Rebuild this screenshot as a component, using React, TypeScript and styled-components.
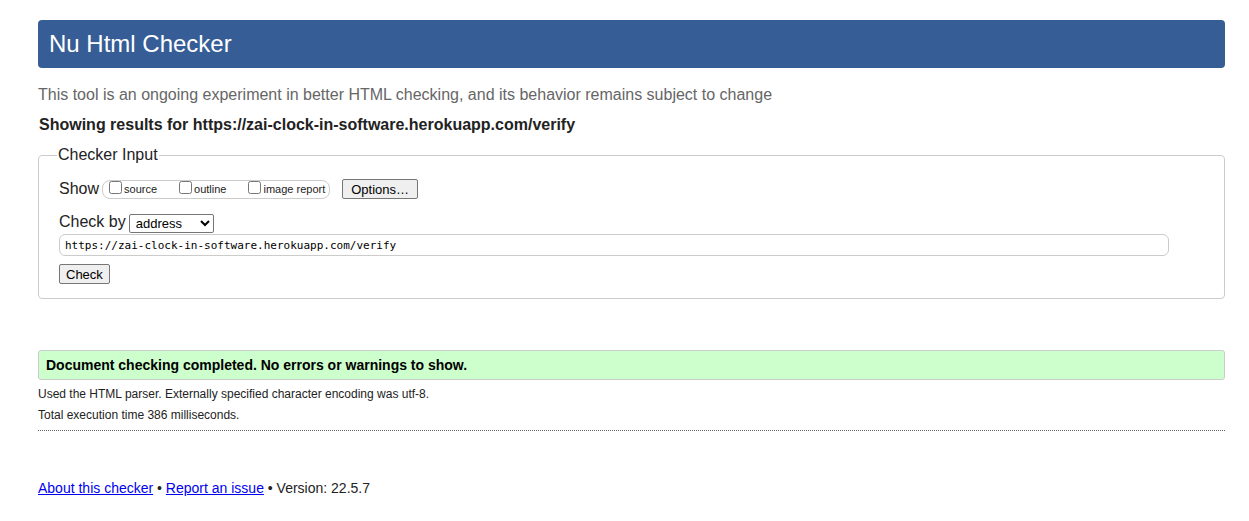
import styled, { createGlobalStyle } from 'styled-components';

const GlobalStyle = createGlobalStyle`
  html, body {
    margin: 0;
    padding: 0;
    background: #fff;
  }
  body {
    font-family: 'Liberation Sans', Arial, sans-serif;
    color: #222;
  }
`;

const App = () => {
  return (
    <Page>
      <GlobalStyle />
      <Header>
        <Title>Nu Html Checker</Title>
      </Header>

      <Intro>This tool is an ongoing experiment in better HTML checking, and its behavior remains subject to change</Intro>

      <ResultsFor>Showing results for https://zai-clock-in-software.herokuapp.com/verify</ResultsFor>

      <InputSet>
        <Legend>Checker Input</Legend>

        <Row>
          <RowLabel>Show</RowLabel>
          <CheckGroup>
            <CheckLabel $gap={20}>
              <Box type="checkbox" />
              source
            </CheckLabel>
            <CheckLabel $gap={20}>
              <Box type="checkbox" />
              outline
            </CheckLabel>
            <CheckLabel $gap={0}>
              <Box type="checkbox" />
              image report
            </CheckLabel>
          </CheckGroup>
          <Button>Options…</Button>
        </Row>

        <Row>
          <RowLabel>Check by</RowLabel>
          <Select defaultValue="address">
            <option value="address">address</option>
            <option value="file">file upload</option>
            <option value="text">text input</option>
          </Select>
        </Row>

        <UrlInput defaultValue="https://zai-clock-in-software.herokuapp.com/verify" />

        <CheckRow>
          <Button $narrow>Check</Button>
        </CheckRow>
      </InputSet>

      <Success>Document checking completed. No errors or warnings to show.</Success>

      <Details>
        <DetailLine>Used the HTML parser. Externally specified character encoding was utf-8.</DetailLine>
        <DetailLine>Total execution time 386 milliseconds.</DetailLine>
      </Details>

      <Footer>
        <Link href="#">About this checker</Link> • <Link href="#">Report an issue</Link> • Version: 22.5.7
      </Footer>
    </Page>
  );
};

const Page = styled.div`
  padding: 20px 24px 0 38px;
  display: flex;
  flex-direction: column;
`;

const Header = styled.header`
  height: 48px;
  background: #365d95;
  border-radius: 4px;
  display: flex;
  align-items: center;
  padding: 0 11px;
`;

const Title = styled.h1`
  margin: 0;
  font-size: 24px;
  font-weight: normal;
  color: #fff;
`;

const Intro = styled.p`
  margin: 17px 0 0 0;
  font-size: 16px;
  color: #666;
  line-height: 20px;
`;

const ResultsFor = styled.p`
  margin: 10px 0 0 1px;
  font-size: 16px;
  font-weight: bold;
  color: #222;
  line-height: 20px;
`;

const InputSet = styled.fieldset`
  margin: 11px 0 0 0;
  padding: 14px 20px 14px 20px;
  border: 1px solid #ccc;
  border-radius: 4px;
  min-width: 0;
`;

const Legend = styled.legend`
  padding: 0 1px;
  margin-left: -2px;
  font-size: 16px;
  color: #222;
  line-height: 18px;
`;

const Row = styled.div`
  display: flex;
  align-items: center;
  height: 22px;
  margin-bottom: 11px;
`;

const RowLabel = styled.span`
  font-size: 16px;
  color: #222;
  margin-right: 3px;
`;

const CheckGroup = styled.span`
  display: inline-flex;
  align-items: center;
  height: 17px;
  border: 1px solid #ccc;
  border-radius: 8px;
  padding: 0 4px 0 4px;
  margin-right: 12px;
`;

const CheckLabel = styled.label<{ $gap: number }>`
  display: inline-flex;
  align-items: center;
  font-size: 11px;
  color: #222;
  margin-right: ${(p) => p.$gap}px;
`;

const Box = styled.input`
  width: 13px;
  height: 13px;
  margin: 0 2px 3px 2px;
`;

const Button = styled.button<{ $narrow?: boolean }>`
  font-family: 'Liberation Sans', Arial, sans-serif;
  font-size: 13px;
  color: #000;
  background: #efefef;
  border: 1px solid #767676;
  border-radius: 2px;
  height: 20px;
  padding: 0 ${(p) => (p.$narrow ? 6 : 8)}px;
`;

const Select = styled.select`
  font-family: 'Liberation Sans', Arial, sans-serif;
  font-size: 13px;
  height: 19px;
  width: 85px;
  border: 1px solid #767676;
  border-radius: 2px;
  background: #fff;
  color: #000;
  padding: 0 2px;
  margin-top: 2px;
`;

const UrlInput = styled.input`
  display: block;
  box-sizing: border-box;
  width: 1110px;
  height: 22px;
  margin: -10px 0 8px 0;
  padding: 0 5px;
  font-family: 'DejaVu Sans Mono', 'Liberation Mono', monospace;
  font-size: 11px;
  color: #000;
  border: 1px solid #ccc;
  border-radius: 6px;
  outline: none;
`;

const CheckRow = styled.div`
  display: flex;
`;

const Success = styled.p`
  margin: 51px 0 0 0;
  height: 28px;
  display: flex;
  align-items: center;
  padding: 0 7px;
  background: #ccffcc;
  border: 1px solid #ccc;
  border-radius: 3px;
  font-size: 14px;
  font-weight: bold;
  color: #000;
`;

const Details = styled.div`
  margin-top: 4px;
  padding-bottom: 4px;
  border-bottom: 1px dotted #666;
`;

const DetailLine = styled.p`
  margin: 0;
  font-size: 12px;
  line-height: 21px;
  color: #222;
`;

const Footer = styled.p`
  margin: 49px 0 0 0;
  font-size: 14px;
  color: #222;
`;

const Link = styled.a`
  color: #0000ee;
  text-decoration: underline;
`;

export default App;
